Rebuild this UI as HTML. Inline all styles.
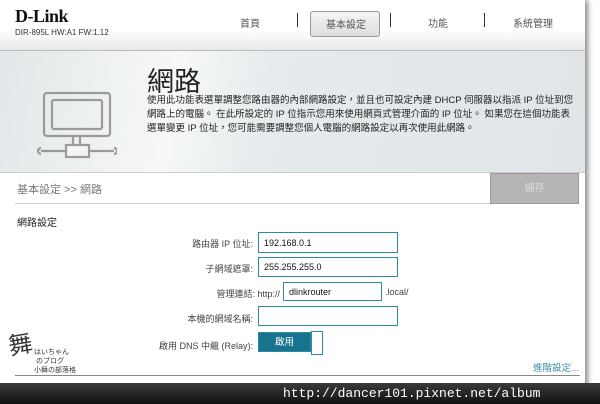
<!DOCTYPE html><html><head><meta charset="utf-8"><style>
body{margin:0;width:600px;height:404px;overflow:hidden;background:#fff;font-family:"Liberation Sans","Noto Sans CJK TC",sans-serif;position:relative}
.pg{position:absolute;left:0;top:0;width:585px;height:404px;background:#fff;box-shadow:3px 0 5px rgba(0,0,0,.45)}
.a{position:absolute}
.hdr{left:0;top:0;width:585px;height:50px;background:linear-gradient(#fff 60%,#e9e9e9)}
.nav{font-size:10px;color:#555;top:15px}
.sep{width:1px;height:14px;background:#333;top:13px}
.ban{left:0;top:50px;width:585px;height:122px;background:linear-gradient(100deg,#e3e7e9 0%,#f6f8f8 30%,#e6ebed 45%,#dfe5e8 100%);border-top:1px solid #bbb}
.lbl{font-size:9px;color:#444;text-align:right;width:253px;left:0}
.inp{border:1px solid #2e8aa3;background:#fff;height:19px;font-size:9px;color:#111;line-height:19px;padding-left:5px;box-sizing:border-box}
</style></head><body>
<div class="pg">
<div class="a hdr"></div>
<div class="a" style="left:15px;top:6px;font:bold 18px 'Liberation Serif',serif;color:#111;letter-spacing:-.5px">D-Link</div>
<div class="a" style="left:15px;top:28px;font-size:8px;color:#333">DIR-895L HW:A1 FW:1.12</div>
<div class="a nav" style="left:240px">首頁</div>
<div class="a sep" style="left:297px"></div>
<div class="a" style="left:310px;top:11px;width:68px;height:24px;border:1px solid #999;border-radius:3px;background:linear-gradient(#f4f4f4,#dedede)"></div>
<div class="a nav" style="left:326px;top:16px">基本設定</div>
<div class="a sep" style="left:390px"></div>
<div class="a nav" style="left:428px">功能</div>
<div class="a sep" style="left:484px"></div>
<div class="a nav" style="left:513px">系統管理</div>
<div class="a ban"></div>
<svg class="a" style="left:33px;top:88px" width="84" height="72" viewBox="0 0 84 72" fill="none" stroke="#9a9a9a" stroke-width="2.2"><rect x="11" y="5" width="66" height="43" rx="3"/><rect x="19" y="12" width="50" height="29" rx="2"/><path d="M40 48v16M47 48v16"/><path d="M8 63h25M56 63h25"/><path d="M8 60a3 3 0 0 0 0 6M81 60a3 3 0 0 1 0 6"/><rect x="33" y="57" width="23" height="12" fill="#f3f5f5"/></svg>
<div class="a" style="left:147px;top:60px;font-size:27px;color:#222">網路</div>
<div class="a" style="left:147px;top:94px;width:430px;font-size:9.5px;line-height:14px;color:#222">使用此功能表選單調整您路由器的內部網路設定，並且也可設定內建 DHCP 伺服器以指派 IP 位址到您網路上的電腦。 在此所設定的 IP 位指示您用來使用網頁式管理介面的 IP 位址。 如果您在這個功能表選單變更 IP 位址，您可能需要調整您個人電腦的網路設定以再次使用此網路。</div>
<div class="a" style="left:0;top:172px;width:585px;height:1px;background:#ccc"></div>
<div class="a" style="left:17px;top:181px;font-size:11px;color:#777">基本設定 &gt;&gt; 網路</div>
<div class="a" style="left:490px;top:173px;width:89px;height:31px;background:#b5b5b5;border:1px solid #999;box-sizing:border-box;color:#ddd;font-size:10px;text-align:center;line-height:30px">儲存</div>
<div class="a" style="left:15px;top:203px;width:475px;height:1px;background:#ccc"></div>
<div class="a" style="left:17px;top:214px;font-size:10px;color:#222">網路設定</div>
<div class="a lbl" style="top:237px">路由器 IP 位址:</div>
<div class="a inp" style="left:258px;top:232px;width:140px;height:21px;line-height:20px">192.168.0.1</div>
<div class="a lbl" style="top:262px">子網域遮罩:</div>
<div class="a inp" style="left:258px;top:257px;width:140px;height:20px">255.255.255.0</div>
<div class="a lbl" style="top:287px;width:280px">管理連結: http://</div>
<div class="a inp" style="left:283px;top:282px;width:99px;border-color:#2e8aa3">dlinkrouter</div>
<div class="a" style="left:385px;top:287px;font-size:9px;color:#444">.local/</div>
<div class="a lbl" style="top:312px">本機的網域名稱:</div>
<div class="a inp" style="left:258px;top:306px;width:140px;height:20px"></div>
<div class="a lbl" style="top:339px">啟用 DNS 中繼 (Relay):</div>
<div class="a" style="left:258px;top:332px;width:53px;height:20px;background:#18748e;border:1px solid #2e8aa3;box-sizing:border-box;color:#fff;font-size:9.5px;text-align:center;line-height:19px">啟用</div>
<div class="a" style="left:311px;top:331px;width:12px;height:24px;background:#fff;border:1px solid #2e8aa3;box-sizing:border-box"></div>
<div class="a" style="left:533px;top:360px;font-size:9.5px;color:#3c8ea6">進階設定...</div>
<div class="a" style="left:15px;top:375px;width:565px;height:1px;background:#888"></div>
<div class="a" style="left:8px;top:325px;font-size:24px;color:#333;transform:rotate(-10deg)">舞</div>
<div class="a" style="left:34px;top:348px;font-size:7px;color:#333;line-height:9px">はいちゃん<br>&nbsp;のブログ<br>小舞の部落格</div>
</div>
<div class="a" style="left:0;top:383px;width:600px;height:21px;background:linear-gradient(#3a3a3a,#111)"></div>
<div class="a" style="left:283px;top:386px;font:13px 'Liberation Mono',monospace;color:#fff">http://dancer101.pixnet.net/album</div>
</body></html>
